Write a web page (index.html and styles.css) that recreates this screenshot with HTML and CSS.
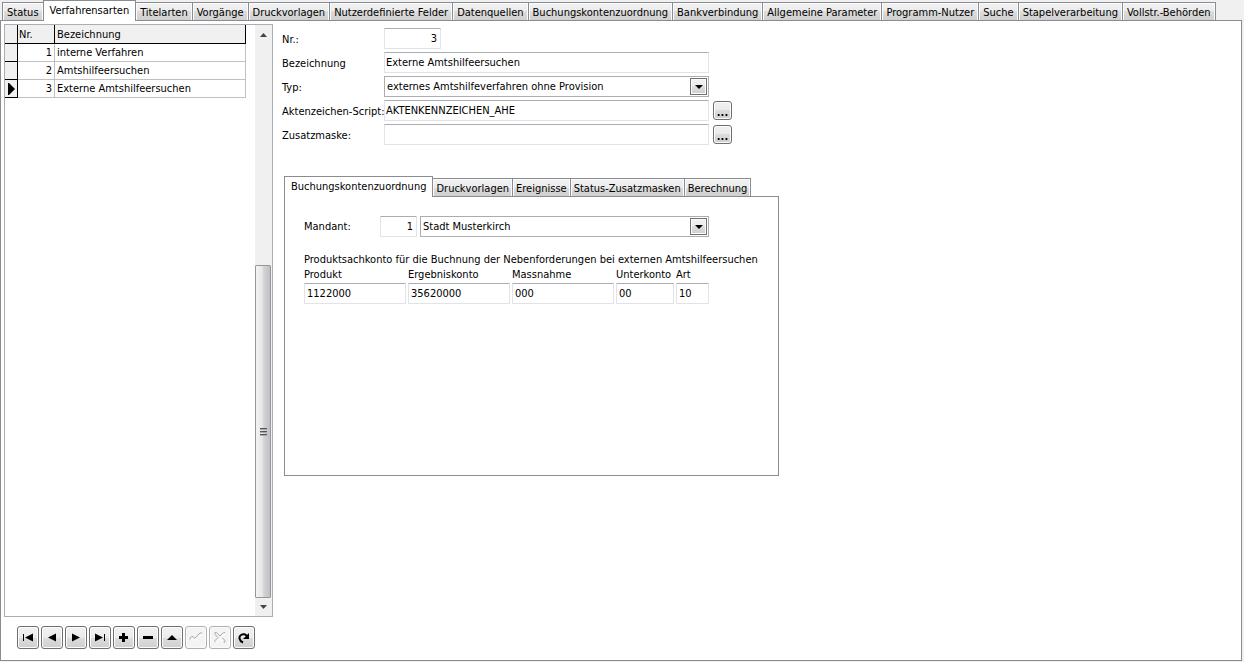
FILE: index.html
```html
<!DOCTYPE html>
<html lang="de">

<head>
    <meta charset="UTF-8">
    <meta name="viewport" content="width=device-width, initial-scale=1.0">
    <title>Verfahrensarten</title>
    <link rel="stylesheet" href="styles.css">
</head>

<body>
    <nav class="tabs">
        <button class="tab">Status</button>
        <button class="tab active">Verfahrensarten</button>
        <button class="tab">Titelarten</button>
        <button class="tab">Vorgänge</button>
        <button class="tab">Druckvorlagen</button>
        <button class="tab">Nutzerdefinierte Felder</button>
        <button class="tab">Datenquellen</button>
        <button class="tab">Buchungskontenzuordnung</button>
        <button class="tab">Bankverbindung</button>
        <button class="tab">Allgemeine Parameter</button>
        <button class="tab">Programm-Nutzer</button>
        <button class="tab">Suche</button>
        <button class="tab">Stapelverarbeitung</button>
        <button class="tab">Vollstr.-Behörden</button>
    </nav>

    <main class="page">
        <section class="sidebar">
            <div class="list-box">
                <div class="list-content">
                    <table class="grid">
                        <thead>
                            <tr>
                                <th class="marker"></th>
                                <th class="number">Nr.</th>
                                <th>Bezeichnung</th>
                            </tr>
                        </thead>
                        <tbody>
                            <tr>
                                <td class="marker"></td>
                                <td class="number">1</td>
                                <td>interne Verfahren</td>
                            </tr>
                            <tr>
                                <td class="marker"></td>
                                <td class="number">2</td>
                                <td>Amtshilfeersuchen</td>
                            </tr>
                            <tr>
                                <td class="marker"><svg width="7" height="12" viewBox="0 0 7 12"><path d="M0 0h1L7 6L1 12H0z"/></svg></td>
                                <td class="number">3</td>
                                <td>Externe Amtshilfeersuchen</td>
                            </tr>
                        </tbody>
                    </table>
                </div>
                <div class="scrollbar">
                    <button class="scroll-arrow" aria-label="Nach oben"><svg width="7" height="4" viewBox="0 0 7 4"><path d="M0 4L3.5 0L7 4Z"/></svg></button>
                    <div class="scroll-track">
                        <div class="scroll-thumb"><span class="grip"></span></div>
                    </div>
                    <button class="scroll-arrow" aria-label="Nach unten"><svg width="7" height="4" viewBox="0 0 7 4"><path d="M0 0L3.5 4L7 0Z"/></svg></button>
                </div>
            </div>

            <div class="navigator">
                <button aria-label="Erster"><svg width="14" height="13" viewBox="0 0 14 13"><path d="M2 3h1v7h-1zM12 2.5v8L4 6.5z"/></svg></button>
                <button aria-label="Vorheriger"><svg width="14" height="13" viewBox="0 0 14 13"><path d="M11 2.5v8L3 6.5z"/></svg></button>
                <button aria-label="Nächster"><svg width="14" height="13" viewBox="0 0 14 13"><path d="M3 2.5v8L11 6.5z"/></svg></button>
                <button aria-label="Letzter"><svg width="14" height="13" viewBox="0 0 14 13"><path d="M2 2.5v8L10 6.5zM11 3h1v7h-1z"/></svg></button>
                <button aria-label="Einfügen"><svg width="14" height="13" viewBox="0 0 14 13"><path d="M5 2h3v3h3v3h-3v3h-3v-3h-3v-3h3z"/></svg></button>
                <button aria-label="Löschen"><svg width="14" height="13" viewBox="0 0 14 13"><path d="M2 5h10v3h-10z"/></svg></button>
                <button aria-label="Bearbeiten"><svg width="14" height="13" viewBox="0 0 14 13"><path d="M2 9L7 4L12 9Z"/></svg></button>
                <button aria-label="Speichern" disabled><svg width="14" height="13" viewBox="0 0 14 13"><path class="line" d="M1 8.5v-1.500l1.500-1.500h1.500l1.500 2L11 2h2"/><path class="line light" d="M2 9l1.500-1.500l2 2.500L13 3"/></svg></button>
                <button aria-label="Abbrechen" disabled><svg width="14" height="13" viewBox="0 0 14 13"><path class="line" d="M5 6.500L2 3.500v-2h1.500L7 5l3.500-3.500h1.500M5 6.500L2 9.500v1.500M9 6.500l3 3v1.500h-1.500"/><path class="line light" d="M3 11.500h1.500L7 8l3 3.500M8.500 6.500L12.500 2.500"/></svg></button>
                <button aria-label="Aktualisieren"><svg width="14" height="13" viewBox="0 0 14 13"><path class="bold" d="M6 11.500C2 10 1.500 5.500 4 4C6 2.500 9 3 10 5.500"/><path d="M12 2v6h-6z"/></svg></button>
            </div>
        </section>

        <section class="details">
            <form class="form">
                <label for="nr">Nr.:</label>
                <input type="text" class="field short right" id="nr" value="3">

                <label for="bezeichnung">Bezeichnung</label>
                <input type="text" class="field" id="bezeichnung" value="Externe Amtshilfeersuchen">

                <label for="typ">Typ:</label>
                <div class="select">
                    <select id="typ">
                        <option>externes Amtshilfeverfahren ohne Provision</option>
                    </select>
                    <span class="drop"><svg width="8" height="4" viewBox="0 0 8 4"><path d="M0 0h8L4 4z"/></svg></span>
                </div>

                <label for="script">Aktenzeichen-Script:</label>
                <input type="text" class="field" id="script" value="AKTENKENNZEICHEN_AHE">
                <button type="button" class="more">...</button>

                <label for="maske">Zusatzmaske:</label>
                <input type="text" class="field" id="maske">
                <button type="button" class="more">...</button>
            </form>

            <div class="accounts">
                <nav class="tabs">
                    <button class="tab active">Buchungskontenzuordnung</button>
                    <button class="tab">Druckvorlagen</button>
                    <button class="tab">Ereignisse</button>
                    <button class="tab">Status-Zusatzmasken</button>
                    <button class="tab">Berechnung</button>
                </nav>
                <div class="accounts-page">
                    <div class="client">
                        <label for="mandant">Mandant:</label>
                        <input type="text" class="field right" id="mandant" value="1">
                        <div class="select">
                            <select aria-label="Mandant">
                                <option>Stadt Musterkirch</option>
                            </select>
                            <span class="drop"><svg width="8" height="4" viewBox="0 0 8 4"><path d="M0 0h8L4 4z"/></svg></span>
                        </div>
                    </div>

                    <p class="caption">Produktsachkonto für die Buchnung der Nebenforderungen bei externen Amtshilfeersuchen</p>
                    <div class="account">
                        <label for="produkt">Produkt</label>
                        <label for="ergebniskonto">Ergebniskonto</label>
                        <label for="massnahme">Massnahme</label>
                        <label for="unterkonto">Unterkonto</label>
                        <label for="art">Art</label>
                        <input type="text" class="field" id="produkt" value="1122000">
                        <input type="text" class="field" id="ergebniskonto" value="35620000">
                        <input type="text" class="field" id="massnahme" value="000">
                        <input type="text" class="field" id="unterkonto" value="00">
                        <input type="text" class="field" id="art" value="10">
                    </div>
                </div>
            </div>
        </section>
    </main>
</body>

</html>
```
FILE: styles.css
```css
* {
    box-sizing: border-box;
}

body {
    margin: 0;
    padding: 0 2px 1px 0;
    min-height: 100vh;
    display: flex;
    flex-direction: column;
    background-color: #f0f0f0;
    color: #000;
    font-family: Tahoma, "DejaVu Sans Condensed", "DejaVu Sans", sans-serif;
    font-size: 11px;
    line-height: 14px;
}

button,
input,
select {
    font: inherit;
    color: inherit;
    margin: 0;
    padding: 0;
}

svg {
    display: block;
}

/* Tabs */
.tabs {
    display: flex;
    align-items: flex-end;
    padding-left: 2px;
}

.tab {
    height: 19px;
    margin-bottom: -1px;
    padding: 2px 4px 0;
    border: 1px solid #898c95;
    border-left-width: 0;
    background: linear-gradient(#f2f2f2, #ebebeb 50%, #dddddd 50%, #cfcfcf);
    box-shadow: inset 1px 1px #fcfcfc, inset -1px 0 #fcfcfc;
    white-space: nowrap;
}

.tab:first-child {
    border-left-width: 1px;
}

.tab.active {
    height: 21px;
    padding: 0 6px;
    border-left-width: 1px;
    border-bottom: 0;
    background: #fff;
    box-shadow: none;
    position: relative;
}

.tab:first-child:not(.active) {
    border-right-width: 0;
}

.page {
    flex: 1;
    display: flex;
    gap: 9px;
    padding: 3px;
    border: 1px solid #898c95;
    background-color: #fff;
}

/* Record list */
.sidebar {
    width: 269px;
    flex: none;
    display: flex;
    flex-direction: column;
}

.list-box {
    flex: 1;
    display: flex;
    border: 1px solid #abadb3;
}

.list-content {
    flex: 1;
}

.grid {
    width: 241px;
    table-layout: fixed;
    border-collapse: separate;
    border-spacing: 0;
}

.grid th,
.grid td {
    height: 18px;
    padding: 1px 1px 0;
    border-right: 1px solid #c0c0c0;
    border-bottom: 1px solid #c0c0c0;
    font-weight: normal;
    text-align: left;
    white-space: nowrap;
}

.grid th {
    height: 19px;
    background-color: #f0f0f0;
    border-color: #000;
}

.grid .marker {
    width: 13px;
    padding: 0 3px;
    background-color: #f0f0f0;
    border-color: #000;
}

.grid .number {
    width: 37px;
}

.grid td.number {
    padding-right: 2px;
    text-align: right;
}

.grid td:last-child,
.grid th:last-child {
    padding-left: 2px;
}

.scrollbar {
    width: 17px;
    display: flex;
    flex-direction: column;
    padding: 1px 1px 1px 0;
    background-color: #f0f0f0;
}

.scroll-arrow {
    height: 17px;
    display: flex;
    align-items: center;
    justify-content: center;
    border: 0;
    background: none;
    fill: #444;
}

.scroll-track {
    flex: 1;
    display: flex;
    align-items: flex-end;
}

.scroll-thumb {
    width: 16px;
    height: 60%;
    display: flex;
    align-items: center;
    justify-content: center;
    border: 1px solid #979797;
    border-radius: 1px;
    background: linear-gradient(to right, #f4f4f4, #e6e6e8 45%, #d2d3d6 55%, #bfc0c5);
}

.grip {
    width: 7px;
    height: 8px;
    background: repeating-linear-gradient(#555 0 1px, #aaa 1px 2px, transparent 2px 3px);
}

/* Navigator */
.navigator {
    display: flex;
    gap: 2px;
    padding: 9px 13px 8px;
}

.navigator button,
.more {
    display: flex;
    align-items: center;
    justify-content: center;
    border: 1px solid #707070;
    border-radius: 3px;
    background: linear-gradient(#f2f2f2, #ebebeb 50%, #dddddd 50%, #cfcfcf);
    box-shadow: inset 0 0 0 1px #fcfcfc;
}

.navigator button {
    width: 22px;
    height: 23px;
}

.navigator button:disabled {
    border-color: #adb2b5;
    background: #f4f4f4;
}

.line {
    fill: none;
    stroke: #a8a8a8;
}

.line.light {
    stroke: #fff;
}

.bold {
    fill: none;
    stroke: #000;
    stroke-width: 2;
}

/* Detail form */
.details {
    flex: 1;
    padding: 4px 0;
}

.form {
    display: grid;
    grid-template-columns: 102px 325px 24px;
    grid-auto-rows: 21px;
    gap: 3px 0;
    align-items: center;
}

.form label {
    grid-column: 1;
    padding-top: 2px;
    white-space: nowrap;
}

.field {
    width: 100%;
    height: 21px;
    padding: 0 2px 1px;
    border: 1px solid #e2e3ea;
    border-top-color: #abadb3;
    border-radius: 1px;
    background-color: #fff;
}

.form .field {
    padding-left: 1px;
}

.field.short {
    width: 57px;
}

.field.right {
    padding-right: 3px;
    text-align: right;
}

.select {
    position: relative;
    height: 21px;
}

.select select {
    width: 100%;
    height: 21px;
    padding: 1px 20px 0 2px;
    border: 1px solid #abadb3;
    border-radius: 0;
    background-color: #fff;
    appearance: none;
}

.drop {
    position: absolute;
    top: 2px;
    right: 2px;
    width: 17px;
    height: 17px;
    display: flex;
    align-items: center;
    justify-content: center;
    border: 1px solid #707070;
    background: linear-gradient(#f2f2f2, #ebebeb 50%, #dddddd 50%, #cfcfcf);
    box-shadow: inset 0 0 0 1px #fcfcfc;
    pointer-events: none;
}

.more {
    width: 19px;
    height: 19px;
    margin-left: 4px;
    padding-top: 4px;
    font-weight: bold;
}

/* Account assignment */
.accounts {
    width: 495px;
    margin: 31px 0 0 2px;
}

.accounts .tabs {
    padding-left: 0;
}

.accounts .tab {
    padding: 2px 3px 0;
}

.accounts .tab.active {
    padding: 0 6px;
}

.accounts-page {
    height: 280px;
    padding: 19px;
    border: 1px solid #898c95;
}

.client {
    display: grid;
    grid-template-columns: 76px 37px 292px;
    align-items: center;
}

.client .select {
    margin-left: 3px;
}

.caption {
    margin: 16px 0 1px;
    white-space: nowrap;
}

.account {
    display: grid;
    grid-template-columns: 102px 102px 102px 58px 33px;
    gap: 1px 2px;
}
```
